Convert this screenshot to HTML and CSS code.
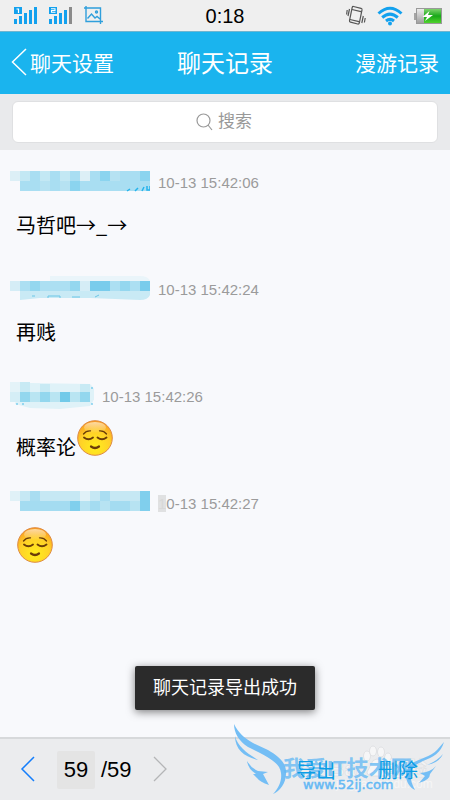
FILE: index.html
```html
<!DOCTYPE html>
<html lang="zh-CN">
<head>
    <meta charset="UTF-8">
    <meta name="viewport" content="width=device-width, initial-scale=1.0">
    <title>聊天记录</title>
    <link rel="stylesheet" href="styles.css">
</head>
<body>

    <!-- emoji e sfondi riutilizzati -->
    <svg class="defs" aria-hidden="true">
        <defs>
            <radialGradient id="face" cx="50%" cy="75%" r="75%">
                <stop offset="0" stop-color="#ffee1c"/>
                <stop offset=".6" stop-color="#ffd028"/>
                <stop offset="1" stop-color="#fa9a1e"/>
            </radialGradient>
            <linearGradient id="shine" x1="0" y1="0" x2="0" y2="1">
                <stop offset="0" stop-color="#fff" stop-opacity=".6"/>
                <stop offset="1" stop-color="#fff" stop-opacity="0"/>
            </linearGradient>
            <linearGradient id="charge" x1="0" y1="0" x2="0" y2="1">
                <stop offset="0" stop-color="#7fd36e"/>
                <stop offset=".5" stop-color="#18a818"/>
                <stop offset="1" stop-color="#4fd32c"/>
            </linearGradient>
            <linearGradient id="empty" x1="0" y1="0" x2="0" y2="1">
                <stop offset="0" stop-color="#eee"/>
                <stop offset="1" stop-color="#9c9c9c"/>
            </linearGradient>
            <symbol id="relieved" viewBox="0 0 36 36">
                <circle cx="18" cy="18" r="17.3" fill="url(#face)" stroke="#dd8a45" stroke-width="1"/>
                <ellipse cx="18" cy="7.5" rx="11" ry="5.5" fill="url(#shine)"/>
                <g fill="none" stroke="#6b3d08" stroke-linecap="round">
                    <path d="M6.500 14q2.500-3.500 7-3.200M29.500 14q-2.500-3.500-7-3.200" stroke-width="1.300"/>
                    <path d="M7 17.500q4.500 3.500 9 0M20.500 17.500q4.500 3.500 9 0" stroke-width="1.900"/>
                    <path d="M14 26.500q4 3 8 0" stroke-width="2.200"/>
                </g>
            </symbol>
        </defs>
    </svg>

    <div class="status-bar">
        <div class="status-icons status-left">
            <svg width="24" height="18" viewBox="0 0 24 18" fill="#13a1ee">
                <path d="M0 0h8v7H0z"/>
                <path d="M2.500 2h2v4" fill="none" stroke="#fff" stroke-width="1.200"/>
                <path d="M0 12h3v5H0zM5 9h3v8H5zM10 6h3v11h-3zM15 3h3v14h-3zM20 0h3v17h-3z"/>
            </svg>
            <svg width="24" height="18" viewBox="0 0 24 18" fill="#13a1ee">
                <path d="M0 0h8v7H0z"/>
                <path d="M2 1.800h4v1.700H2.500v1.700H6.500" fill="none" stroke="#fff" stroke-width="1.100"/>
                <path d="M0 12h3v5H0zM5 9h3v8H5zM10 6h3v11h-3zM15 3h3v14h-3z"/>
                <path d="M20 0h3v17h-3z" fill="#8b8b8b"/>
            </svg>
            <svg width="20" height="19" viewBox="0 0 20 19" fill="none" stroke="#2f9fdc" stroke-width="1.400">
                <path d="M2 0v15.500h17M0 2h16.500v16M3.500 12.500l4-4.500 3.500 4 2-1.500 3 2.500"/>
                <circle cx="12.500" cy="6" r="1"/>
            </svg>
        </div>
        <time class="clock">0:18</time>
        <div class="status-icons status-right">
            <svg width="20" height="22" viewBox="0 0 20 22" fill="none" stroke="#555" stroke-width="1.200">
                <path d="M7.500 1.500l7.500 1.800q1.200.4 1 1.600L13.300 18q-.4 1.300-1.600 1l-7.200-1.800q-1.200-.4-1-1.600L6.200 2.500q.3-1.200 1.300-1z"/>
                <path d="M6 4.500l9 2.200M4 14.500l9 2.200M3.500 4L2 11M1.200 5L.600 9.500M17.300 11l-1.500 7M19.200 13l-.800 4.500"/>
            </svg>
            <svg width="26" height="20" viewBox="0 0 26 20" fill="none" stroke="#13a1ee" stroke-width="3">
                <path d="M1.500 7.500Q13-3 24.500 7.500M5.200 11.500q7.800-6.800 15.600 0M9 15q4-3.300 8 0"/>
                <circle cx="13" cy="17.500" r="2" fill="#13a1ee" stroke="none"/>
            </svg>
            <svg width="28" height="16" viewBox="0 0 28 16">
                <path d="M0 5h3v7H0z" fill="#a5a5a5"/>
                <rect x="2.500" y=".500" width="25" height="15" fill="url(#empty)" stroke="#999"/>
                <path d="M10 1h17v14H10z" fill="url(#charge)"/>
                <path d="M15.500 3l-7 6h4.500l-2 4 8-6h-5z" fill="#fff"/>
            </svg>
        </div>
    </div>

    <header class="nav-bar">
        <a class="nav-back" href="#settings">
            <svg width="16" height="28" viewBox="0 0 16 28" fill="none" stroke="#fff" stroke-width="1.500">
                <path d="M15 1L1.500 14 15 27"/>
            </svg>
            聊天设置
        </a>
        <h1>聊天记录</h1>
        <a class="nav-action" href="#roaming">漫游记录</a>
    </header>

    <div class="search-bar">
        <label class="search-box">
            <svg width="17" height="18" viewBox="0 0 17 18" fill="none" stroke="#999" stroke-width="1.200">
                <circle cx="7.500" cy="7.500" r="6.500"/>
                <path d="M12 12l4 5"/>
            </svg>
            <input type="text" placeholder="搜索" aria-label="搜索">
        </label>
    </div>

    <main class="messages">
        <article class="message">
            <div class="message-head">
                <svg width="140" height="26" viewBox="0 0 140 26">
                    <path d="M10 2h130v20H10z" fill="#a9def2"/>
                    <path d="M0 2h10v10H0zM70 2h10v10H70z" fill="#dceff6"/>
                    <path d="M10 2h10v10H10zM30 2h10v10H30zM50 2h10v10H50z" fill="#c3e8f4"/>
                    <path d="M60 12h10v10H60zM90 2h10v10H90zM130 2h10v10h-10z" fill="#8bd4ef"/>
                    <path d="M30 12h10v10H30zM50 12h10v10H50zM100 2h10v10h-10z" fill="#b6e2f2"/>
                    <path d="M117 22l3-2M125 22l3-3M132 22l2-4M137 17v4h3v-4" fill="none" stroke="#25b3ec" stroke-width="1.500"/>
                </svg>
                <time>10-13 15:42:06</time>
            </div>
            <p class="message-body">马哲吧→_→</p>
        </article>

        <article class="message">
            <div class="message-head">
                <svg width="140" height="26" viewBox="0 0 140 26">
                    <path d="M40 0h10v5H40zM50 0h80q8 0 10 5H50z" fill="#eaf5fa"/>
                    <path d="M10 15h130v4q-2 5-10 5l-50-2-50 0-20 2z" fill="#c9eaf5"/>
                    <path d="M10 5h130v10H10z" fill="#acdff2"/>
                    <path d="M0 5h10v10H0zM70 5h10v10H70z" fill="#d5edf6"/>
                    <path d="M20 5h10v10H20zM60 5h10v10H60zM110 5h10v10h-10z" fill="#94d7ef"/>
                    <path d="M80 5h20v10H80zM130 5h10v10h-10z" fill="#79ccec"/>
                    <path d="M22 20h3M38 22v-2h12v2M62 21h8M85 21l4-2" fill="none" stroke="#6dc6e6"/>
                </svg>
                <time>10-13 15:42:24</time>
            </div>
            <p class="message-body">再贱</p>
        </article>

        <article class="message">
            <div class="message-head">
                <svg width="84" height="28" viewBox="0 0 84 28">
                    <path d="M10 1h10l60 1q5 4 5 10t-5 12l-30 3-30-1-15-4z" fill="#dff2f8"/>
                    <path d="M0 0h20v10H0z" fill="#e4f3f8"/>
                    <path d="M10 0h10v10H10zM30 2h10v8H30zM70 2h10v8H70z" fill="#c8eaf4"/>
                    <path d="M0 10h10v10H0z" fill="#d5eef6"/>
                    <path d="M10 10h70v10H10z" fill="#b9e5f2"/>
                    <path d="M10 10h10v10H10zM30 10h10v10H30zM70 10h10v10H70z" fill="#93d7ee"/>
                    <path d="M50 10h10v10H50z" fill="#71cae9"/>
                    <path d="M6 22h2M12 22h2M81 6h2M81 22h2" stroke="#4dbce8"/>
                </svg>
                <time>10-13 15:42:26</time>
            </div>
            <p class="message-body">概率论<svg class="emoji" role="img" aria-label="满足"><use href="#relieved"/></svg></p>
        </article>

        <article class="message">
            <div class="message-head">
                <svg width="140" height="26" viewBox="0 0 140 26">
                    <path d="M0 1h140v10H0z" fill="#c6e8f4"/>
                    <path d="M0 1h10v10H0zM70 1h10v10H70z" fill="#e0f1f7"/>
                    <path d="M20 1h10v10H20zM90 1h10v10H90z" fill="#a9ddf1"/>
                    <path d="M10 11h130v10H10z" fill="#a4dcf1"/>
                    <path d="M70 11h10v10H70zM90 11h10v10H90zM120 11h10v10h-10z" fill="#b7e3f2"/>
                    <path d="M60 11h10v10H60zM130 1h10v20h-10z" fill="#80cfed"/>
                </svg>
                <time><span class="smudged">1</span>0-13 15:42:27</time>
            </div>
            <p class="message-body"><svg class="emoji" role="img" aria-label="满足"><use href="#relieved"/></svg></p>
        </article>
    </main>

    <div class="toast" role="status">聊天记录导出成功</div>

    <footer class="pager">
        <button class="pager-arrow" type="button" aria-label="上一页">
            <svg width="16" height="28" viewBox="0 0 16 28" fill="none" stroke="#147efb" stroke-width="1.500">
                <path d="M14 1L2 13l12 12"/>
            </svg>
        </button>
        <input class="page-number" type="text" value="59" aria-label="页码">
        <span class="page-total">/59</span>
        <button class="pager-arrow" type="button" aria-label="下一页" disabled>
            <svg width="16" height="28" viewBox="0 0 16 28" fill="none" stroke="#b4b5b7" stroke-width="1.300">
                <path d="M2 1l12 12L2 25"/>
            </svg>
        </button>
        <div class="pager-actions">
            <button type="button">导出</button>
            <button type="button">删除</button>
        </div>

        <svg class="watermark" width="220" height="80" viewBox="0 0 220 80">
            <g fill="#f6f6f7" stroke="#d9dadc" stroke-width=".700">
                <ellipse cx="137" cy="36" rx="3.500" ry="5"/>
                <ellipse cx="143" cy="31" rx="3.500" ry="5"/>
                <ellipse cx="151" cy="32" rx="3.500" ry="5"/>
                <ellipse cx="158" cy="38" rx="3.500" ry="5"/>
                <path d="M147 39q4 0 6 5t4 8q0 5-10 4-10 1-10-4 2-3 4-8t6-5z"/>
            </g>
            <text class="mark-baidu" x="100" y="56">Bai</text>
            <text class="mark-baidu" x="157" y="56">经验</text>
            <text class="mark-baidu-url" x="106" y="68">jingyan.baidu.com</text>
            <g fill="#74bef5">
                <path d="M4 4C8 12 14 18 23 23L38 30C50 37 57 44 56 54 56 63 50 71 43 74 49 68 52 60 51 53 50 42 36 36 18 27 9 21 4 13 4 4z"/>
                <path d="M5 16C8 27 17 33 28 40 15 37 5 30 5 16z"/>
                <path d="M17 41Q21 48 28 51L38 52 33 54 39 65Q30 62 27 58L23 54 26 54Q18 49 17 41z"/>
                <path d="M214 22C211 33 203 37 193 41 182 46 176 53 185 70 178 67 173 56 178 48 183 39 200 38 207 30z"/>
                <path d="M213 34Q209 43 197 45 207 41 213 34zM206 46Q201 52 190 53L195 56 189 63Q200 60 200 54z"/>
            </g>
            <text class="mark-name" x="53" y="56">我爱IT技术网</text>
            <text class="mark-url" x="73" y="69">www.52ij.com</text>
        </svg>
    </footer>

</body>
</html>
```

FILE: styles.css
```css
* {
    box-sizing: border-box;
}

body {
    display: flex;
    flex-direction: column;
    position: relative;
    min-height: 100vh;
    margin: 0;
    background-color: #f8f9fc;
    color: #000;
    font-family: "Liberation Sans", "Noto Sans CJK SC", sans-serif;
    font-size: 20px;
}

svg {
    flex-shrink: 0;
}

button, input {
    padding: 0;
    border: none;
    background: none;
    font: inherit;
}

a {
    color: inherit;
    text-decoration: none;
}

.defs {
    position: absolute;
    width: 0;
    height: 0;
}

/* barra di stato */
.status-bar {
    display: grid;
    grid-template-columns: 1fr auto 1fr;
    align-items: center;
    height: 31px;
    padding: 0 8px;
    background-color: #efefef;
}

.status-icons {
    display: flex;
    align-items: center;
    gap: 11px;
}

.status-left {
    padding-left: 6px;
}

.status-right {
    justify-content: flex-end;
}

.clock {
    padding-top: 2px;
}

/* intestazione */
.nav-bar {
    display: grid;
    grid-template-columns: 1fr auto 1fr;
    align-items: center;
    height: 63px;
    padding: 0 11px 3px;
    border-top: 1px solid #6fb5cf;
    background-color: #1ab4ee;
    color: #fff;
    font-size: 21px;
}

.nav-bar h1 {
    margin: 0;
    font-size: 24px;
    font-weight: normal;
}

.nav-back {
    display: flex;
    align-items: center;
    gap: 3px;
}

.nav-action {
    text-align: right;
}

/* ricerca */
.search-bar {
    height: 56px;
    padding: 7px 12px;
    background-color: #e9eaec;
}

.search-box {
    display: flex;
    align-items: center;
    justify-content: center;
    gap: 5px;
    height: 42px;
    border: 1px solid #dfe0e2;
    border-radius: 6px;
    background-color: #fff;
}

.search-box input {
    width: 36px;
    outline: none;
    font-size: 17px;
}

.search-box input::placeholder {
    color: #999;
}

/* messaggi */
.messages {
    display: grid;
    grid-auto-rows: 107px;
    flex: 1;
    padding: 18px 10px 0;
}

.message-head {
    display: flex;
    align-items: center;
    gap: 8px;
    height: 28px;
    color: #9b9b9b;
    font-size: 15px;
}

.message-body {
    margin: 10px 0 0;
    padding-left: 6px;
    font-family: "Noto Sans CJK SC", sans-serif;
    line-height: 38px;
}

.smudged {
    background-color: #e0e1e2;
    color: #d8d8d8;
}

.emoji {
    width: 36px;
    height: 36px;
    margin-left: 1px;
    vertical-align: -1px;
}

.toast {
    position: absolute;
    bottom: 90px;
    left: 50%;
    padding: 0 18px;
    border-radius: 2px;
    background-color: #2b2b2b;
    box-shadow: 0 2px 8px rgba(0, 0, 0, 0.5);
    color: #fff;
    font-size: 18px;
    line-height: 44px;
    white-space: nowrap;
    transform: translateX(-50%);
}

/* piede con le pagine */
.pager {
    display: flex;
    align-items: center;
    position: relative;
    height: 63px;
    padding: 0 32px 0 20px;
    border-top: 2px solid #d7d9db;
    background-color: #ebecee;
}

.pager-arrow {
    display: flex;
}

.page-number {
    width: 38px;
    height: 38px;
    margin-left: 21px;
    border-radius: 2px;
    background-color: #e4e4e4;
    font-size: 22px;
    text-align: center;
}

.page-total {
    margin: 0 20px 0 6px;
    font-size: 22px;
}

.pager-actions {
    display: flex;
    gap: 42px;
    position: relative;
    z-index: 1;
    margin-left: auto;
}

.pager-actions button {
    color: #0b9de6;
}

.watermark {
    position: absolute;
    right: 0;
    bottom: 0;
    pointer-events: none;
}

.mark-baidu {
    fill: #f3f3f4;
    stroke: #dcdddf;
    stroke-width: 0.5px;
    font-size: 20px;
    font-weight: bold;
}

.mark-baidu-url {
    fill: #f6f6f6;
    font-size: 12px;
}

.mark-name {
    fill: #65b9f4;
    fill-opacity: 0.8;
    font-size: 22px;
    font-weight: bold;
}

.mark-url {
    fill: #65b9f4;
    stroke: #65b9f4;
    stroke-width: 0.5px;
    font-family: "DejaVu Sans", sans-serif;
    font-size: 13px;
}
```
